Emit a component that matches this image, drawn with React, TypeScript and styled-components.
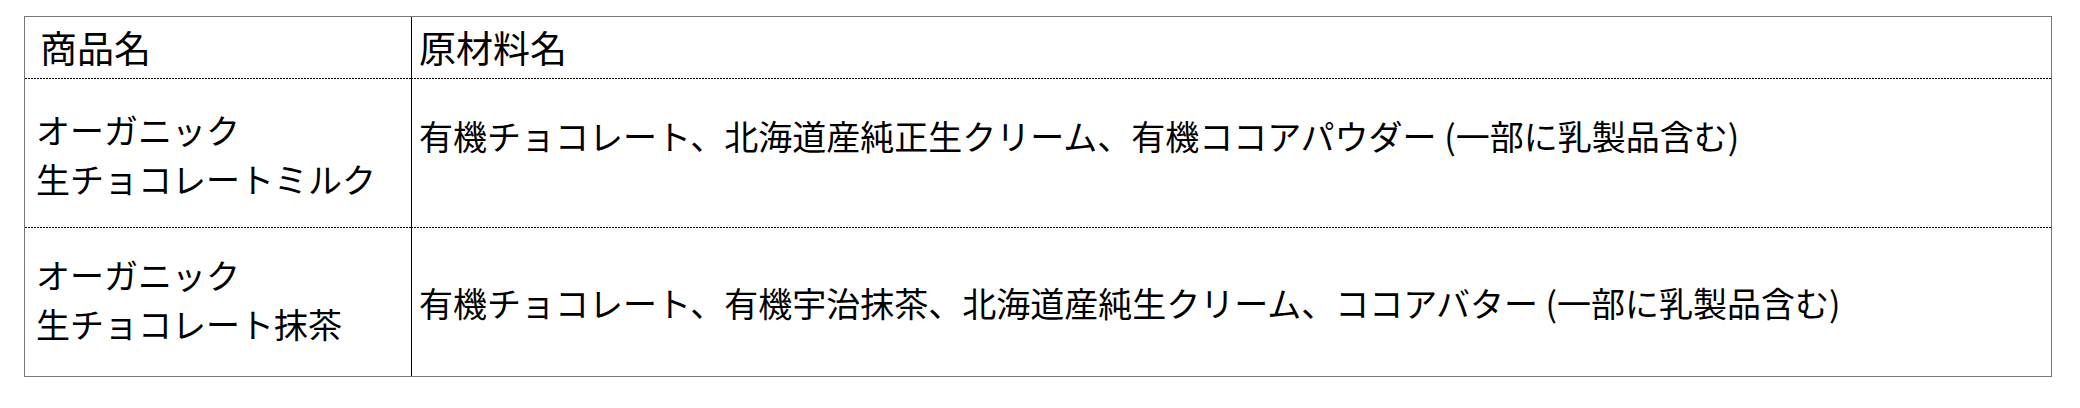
import React from "react";
import styled, { createGlobalStyle, css } from "styled-components";

const GlobalStyle = createGlobalStyle`
  html, body {
    margin: 0;
    padding: 0;
    background: #ffffff;
  }
  body {
    font-family: "Noto Sans CJK JP", "Noto Sans", sans-serif;
    color: #000;
  }
`;

const Page = styled.div`
  padding: 16px 28px 0 24px;
`;

const Table = styled.table`
  width: 100%;
  border-collapse: separate;
  border-spacing: 0;
  border: 1px solid #777777;
  font-size: 34px;
  line-height: 49px;
  table-layout: fixed;
`;

const dottedTop = css`
  background-image: repeating-linear-gradient(
    to right,
    #000 0 2px,
    transparent 2px 3px
  );
  background-size: 100% 1px;
  background-position: left top;
  background-repeat: no-repeat;
  background-origin: border-box;
`;

const HeadCell = styled.th<{ $first?: boolean; $indent?: number }>`
  box-sizing: border-box;
  font-weight: 400;
  font-size: 37px;
  line-height: 49px;
  text-align: left;
  padding: 6px 4px 6px ${(p) => (p.$first ? 11 : 7) + (p.$indent ?? 0)}px;
  ${(p) => (p.$first ? "width: 386px;" : "border-left: 1px solid #000;")}
  white-space: nowrap;
`;

const Cell = styled.td<{ $first?: boolean; $align?: "top" | "middle"; $pt?: number; $pb?: number }>`
  box-sizing: border-box;
  ${dottedTop}
  vertical-align: ${(p) => p.$align ?? "middle"};
  padding: ${(p) => (p.$pt ?? 25) + 1}px 4px ${(p) => p.$pb ?? 25}px
    ${(p) => (p.$first ? 11 : 7)}px;
  ${(p) => (p.$first ? "" : "border-left: 1px solid #000;")}
  white-space: nowrap;
`;

const rows = [
  {
    name: ["オーガニック", "生チョコレートミルク"],
    ingredients:
      "有機チョコレート、北海道産純正生クリーム、有機ココアパウダー (一部に乳製品含む)",
    align: "top" as const,
    pt: 32,
    namePt: 26,
    namePb: 24,
  },
  {
    name: ["オーガニック", "生チョコレート抹茶"],
    ingredients:
      "有機チョコレート、有機宇治抹茶、北海道産純生クリーム、ココアバター (一部に乳製品含む)",
    align: "middle" as const,
    pt: 25,
    namePt: 22,
    namePb: 28,
  },
];

export default function App() {
  return (
    <>
      <GlobalStyle />
      <Page>
        <Table>
          <thead>
            <tr>
              <HeadCell $first $indent={4}>商品名</HeadCell>
              <HeadCell>原材料名</HeadCell>
            </tr>
          </thead>
          <tbody>
            {rows.map((r, i) => (
              <tr key={i}>
                <Cell $first $pt={r.namePt} $pb={r.namePb}>
                  {r.name[0]}
                  <br />
                  {r.name[1]}
                </Cell>
                <Cell $align={r.align} $pt={r.align === "top" ? r.pt : 0} $pb={0}>
                  {r.ingredients}
                </Cell>
              </tr>
            ))}
          </tbody>
        </Table>
      </Page>
    </>
  );
}
